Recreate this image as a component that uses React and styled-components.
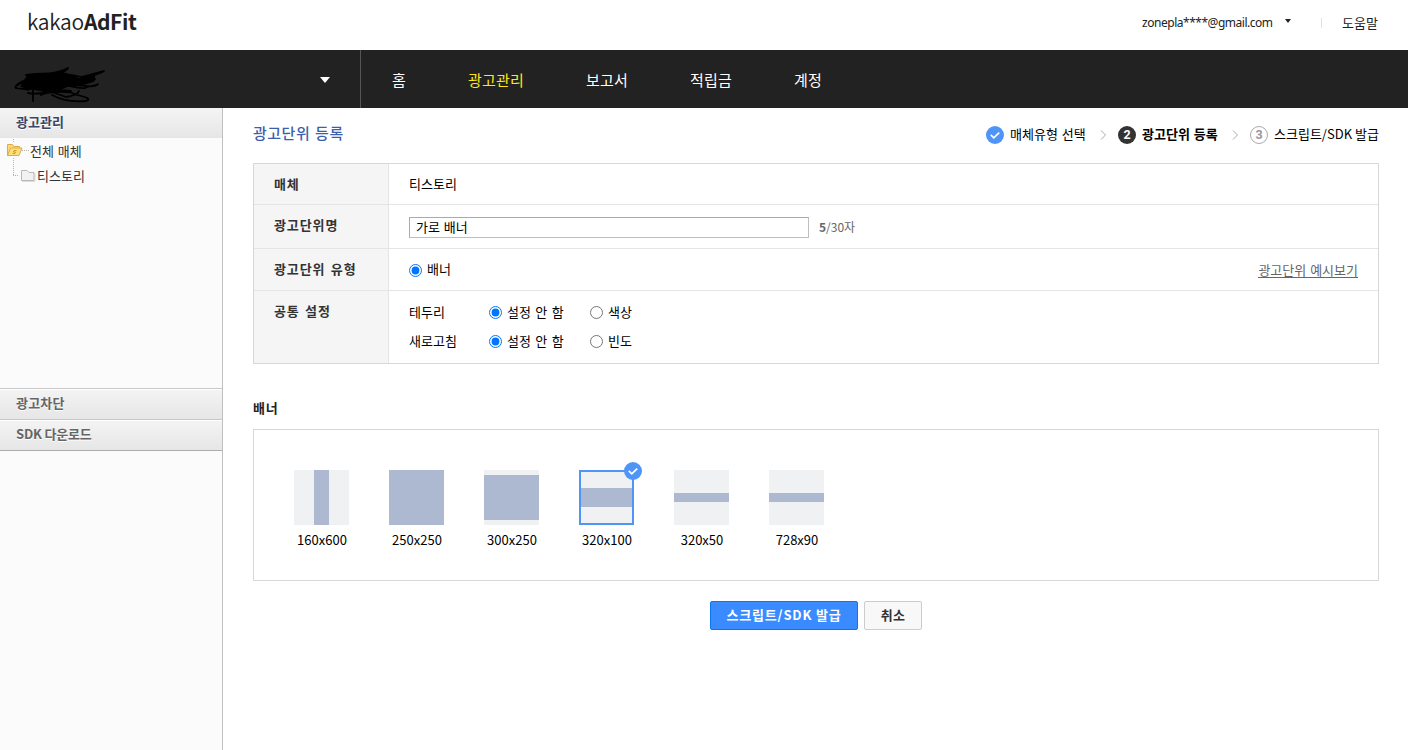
import { styled, createGlobalStyle } from "styled-components";

const GlobalStyle = createGlobalStyle`
  * {
    box-sizing: border-box;
  }
  body {
    margin: 0;
    background: #fff;
    color: #000;
    font-family: "Noto Sans CJK KR", "Noto Sans", sans-serif;
    font-size: 13px;
    line-height: 18px;
    word-spacing: 1px;
  }
`;

const Page = styled.div`
  height: 750px;
  display: flex;
  flex-direction: column;
  overflow: hidden;
`;

const Header = styled.header`
  height: 50px;
  padding: 0 30px 0 27px;
  display: flex;
  justify-content: space-between;
`;

const Logo = styled.h1`
  margin: 0;
  padding-top: 7px;
  color: #222;
  font-size: 21px;
  font-weight: 350;
  line-height: 28px;
  letter-spacing: -0.3px;
`;

const LogoBold = styled.b`
  font-weight: 700;
  letter-spacing: -0.4px;
`;

const UserMenu = styled.div`
  display: flex;
  align-items: center;
  height: 45px;
  color: #222;
`;

const Email = styled.span`
  width: 131px;
  font-family: "Noto Sans", sans-serif;
  font-size: 12px;
  letter-spacing: -0.48px;
  white-space: nowrap;
`;

const Caret = styled.i`
  width: 0;
  height: 0;
  border: solid transparent;
  border-width: ${(props) => props.$size}px ${(props) => props.$half}px 0;
  border-top-color: ${(props) => props.color};
`;

const UserCaret = styled(Caret)`
  margin: 0 30px 4px 12px;
`;

const Divider = styled.span`
  width: 1px;
  height: 10px;
  margin-right: 20px;
  background: #e1e1e1;
`;

const Bar = styled.nav`
  height: 58px;
  display: flex;
  background: #222;
`;

const Account = styled.div`
  width: 361px;
  padding: 2px 30px 0 14px;
  border-right: 1px solid #555;
  display: flex;
  align-items: center;
  justify-content: space-between;
`;

const Menu = styled.div`
  padding-left: 31px;
  display: flex;
  align-items: center;
  gap: 62px;
`;

const MenuItem = styled.span`
  color: ${(props) => (props.$active ? "#ffe616" : "#fff")};
  font-size: 15px;
  letter-spacing: 0.2px;
  padding-top: 1px;
`;

const Body = styled.div`
  flex: 1;
  display: flex;
`;

const Sidebar = styled.aside`
  width: 223px;
  border-right: 1px solid #bfbfbf;
  background: #fbfbfb;
`;

const SideTitle = styled.div`
  height: 30px;
  padding: 5px 16px 0;
  background: linear-gradient(#f4f4f4, #e6e6e6);
  color: #3a4668;
  font-weight: 700;
  word-spacing: 0;
  text-shadow: 0 1px 0 #fff;
`;

const SideLink = styled(SideTitle)`
  height: 31px;
  border-top: 1px solid #c8c8c8;
  box-shadow: inset 0 1px 0 #fff;
  color: #666;
  letter-spacing: ${(props) => props.$spacing || "0"};
`;

const SideEnd = styled.div`
  height: 1px;
  background: #adadad;
`;

const Tree = styled.div`
  height: 250px;
  display: flex;
  align-items: flex-start;
`;

const TreeLabels = styled.div`
  margin-left: -6px;
  padding-top: 4px;
  color: #333;
`;

const TreeLabel = styled.div`
  height: 25px;
  padding-left: ${(props) => props.$indent}px;
`;

const Main = styled.main`
  flex: 1;
  padding: 0 29px 0 30px;
`;

const TitleRow = styled.div`
  height: 55px;
  padding-top: 16px;
  display: flex;
  justify-content: space-between;
  align-items: flex-start;
`;

const Title = styled.h2`
  margin: 0;
  color: #3b5fad;
  font-size: 15px;
  font-weight: 500;
  letter-spacing: 0.5px;
`;

const Steps = styled.div`
  display: flex;
  align-items: center;
  padding-top: 1px;
  svg {
    flex: none;
  }
`;

const StepText = styled.span`
  margin-left: 6px;
  width: ${(props) => props.$width}px;
  padding-bottom: 1px;
  font-weight: ${(props) => (props.$active ? 700 : 400)};
  white-space: nowrap;
`;

const LastStepText = styled(StepText)`
  word-spacing: 0;
`;

const Chevron = styled.svg`
  margin: 0 11px 0 15px;
`;

const Form = styled.div`
  border: 1px solid #d7d7d7;
`;

const Row = styled.div`
  height: ${(props) => props.$height}px;
  display: flex;
  border-bottom: 1px solid #e5e5e5;
  &:last-child {
    border-bottom: 0;
  }
`;

const Label = styled.div`
  width: 135px;
  padding: 11px 0 0 20px;
  border-right: 1px solid #e5e5e5;
  background: #f5f5f5;
  color: #333;
  font-weight: 700;
  letter-spacing: 0.9px;
  word-spacing: 1.5px;
`;

const Field = styled.div`
  flex: 1;
  padding: 0 20px;
  display: flex;
  align-items: center;
`;

const Options = styled(Field)`
  flex-direction: column;
  align-items: flex-start;
  justify-content: center;
  gap: 11px;
`;

const OptionRow = styled.div`
  display: grid;
  grid-template-columns: 80px 101px auto;
`;

const OptionName = styled.span`
  margin-top: -1px;
`;

const TextInput = styled.input`
  width: 400px;
  height: 21px;
  margin-top: 1px;
  padding: 0 6px 1px;
  border: 1px solid #bfbfbf;
  border-top-color: #aaa;
  border-left-color: #aaa;
  font: inherit;
  word-spacing: 1px;
  color: #000;
  outline: 0;
`;

const Count = styled.span`
  margin-left: 10px;
  color: #666;
  font-size: 12px;
`;

const RadioLabel = styled.label`
  display: flex;
  align-items: center;
  gap: 5px;
`;

const TypeField = styled(Field)`
  padding-top: 1px;
`;

const RadioText = styled.span`
  margin-top: -1px;
  padding-bottom: 1px;
  word-spacing: 1.5px;
`;

const Radio = styled.input`
  width: 13px;
  height: 13px;
  margin: 0;
`;

const Example = styled.a`
  margin-left: auto;
  color: #666;
  border-bottom: 1px solid #666;
  line-height: 14px;
`;

const SubTitle = styled.h3`
  height: 65px;
  margin: 0;
  padding-top: 35px;
  color: #222;
  font-size: 13px;
  font-weight: 700;
  letter-spacing: 0.8px;
`;

const Sizes = styled.div`
  height: 152px;
  padding: 40px;
  border: 1px solid #d7d7d7;
  display: flex;
  gap: 40px;
`;

const Size = styled.div`
  position: relative;
  width: 55px;
  display: flex;
  flex-direction: column;
  align-items: center;
  gap: 6px;
`;

const SizeName = styled.span`
  padding-left: 1px;
`;

const Thumb = styled.div`
  width: 55px;
  height: 55px;
  flex: none;
  display: flex;
  align-items: center;
  justify-content: center;
  background: #f0f1f3;
  border: ${(props) => (props.$selected ? "2px solid #4f95f8" : "0")};
`;

const Shape = styled.div`
  width: ${(props) => props.$w};
  height: ${(props) => props.$h};
  background: #acb9d0;
`;

const Badge = styled.div`
  position: absolute;
  top: -8px;
  right: -8px;
  height: 18px;
  svg {
    display: block;
  }
`;

const Buttons = styled.div`
  margin-top: 20px;
  display: flex;
  justify-content: center;
  gap: 6px;
`;

const Button = styled.button`
  width: ${(props) => (props.$primary ? 148 : 58)}px;
  height: 29px;
  padding: 0 0 1px;
  border: 1px solid ${(props) => (props.$primary ? "#0b75ec" : "#ccc")};
  border-radius: 2px;
  background: ${(props) => (props.$primary ? "#398bff" : "#f8f8f8")};
  color: ${(props) => (props.$primary ? "#fff" : "#333")};
  font: inherit;
  font-weight: 700;
  letter-spacing: ${(props) => (props.$primary ? "0.8px" : "0.3px")};
`;

const sizes = [
  { name: "160x600", w: "15px", h: "55px" },
  { name: "250x250", w: "55px", h: "55px" },
  { name: "300x250", w: "55px", h: "45px" },
  { name: "320x100", w: "100%", h: "19px", selected: true },
  { name: "320x50", w: "55px", h: "9px" },
  { name: "728x90", w: "55px", h: "9px" },
];

const CheckIcon = () => (
  <svg width="18" height="18" viewBox="0 0 18 18">
    <circle cx="9" cy="9" r="9" fill="#4f95f8" />
    <path d="M4.8 8.8l3 3 5.4-5.2" fill="none" stroke="#fff" strokeWidth="1.7" />
  </svg>
);

const NumberIcon = ({ value, active }) => (
  <svg width="18" height="18" viewBox="0 0 18 18">
    <circle
      cx="9"
      cy="9"
      r={active ? 9 : 8.5}
      fill={active ? "#333" : "#fff"}
      stroke={active ? "none" : "#aaa"}
    />
    <text
      x="9"
      y="13.4"
      textAnchor="middle"
      fontFamily="Roboto, sans-serif"
      fontSize="12.5"
      fontWeight="700"
      fill={active ? "#fff" : "#999"}
    >
      {value}
    </text>
  </svg>
);

const Arrow = () => (
  <Chevron width="7" height="10" viewBox="0 0 7 10">
    <path d="M1 0.5l4.5 4.5L1 9.5" fill="none" stroke="#aaa" />
  </Chevron>
);

const Scribble = () => (
  <svg width="92" height="46" viewBox="14 57 92 46">
    <path
      d="M27 75l12-1 12 0 12-2 8 3 8 3 8-3 8 0 0 4-6 4-8 3-14 1-8 4-15 1-14-3-10-2 4-6z"
      fill="#000"
    />
    <g fill="none" stroke="#000" strokeWidth="1.8" strokeLinecap="round" strokeLinejoin="round">
      <path d="M16 88c-3-2 9-9 19-12 14-2 27-4 33-8-3 8-43 11-50 17M26 75c20-3 44-1 55 2 8-2 15-4 23-6-8 5-22 7-31 10 8 1 15-2 22-2-2 4-9 4-14 4" />
      <path d="M16 88c7 2 15 1 23 0M33 87v14M27 90c8-3 24-6 34-5 10 0 17 4 24 3 2-2 9-1 13-4-4 5-16 1-20 1" />
      <path d="M28 93c13 3 30-5 43-2M41 95c8-4 31-4 33-1 12 3 18 5 12 7-11 1-23 0-34-6M52 92l14 5c7-1 12-3 13-6" />
    </g>
  </svg>
);

const TreeIcons = () => (
  <svg width="36" height="50" viewBox="0 138 36 50">
    <path
      d="M13.5 139v4M13.5 158v18M13 175.500h6M22 150.500h8"
      fill="none"
      stroke="#b5b5b5"
      strokeDasharray="1 1"
    />
    <path d="M7.500 155.500v-11h5l1.500 2h5.500v3" fill="#fbd978" stroke="#e0aa48" />
    <path d="M7.500 155.500l3-7.500h11.500l-3 7.500z" fill="#ffe07c" stroke="#e0aa48" />
    <path d="M16.500 150.500h-2.500l-.5 1.500h2l-.5 1.500h-2.500" fill="none" stroke="#d09a38" />
    <path d="M22 181.500h13v-8" fill="none" stroke="#ddd" />
    <path d="M21.500 180.500v-10h5.500l2 2h5v8z" fill="#f2f2f4" stroke="#b8b8b8" />
  </svg>
);

const Option = ({ name, text, checked }) => (
  <RadioLabel>
    <Radio type="radio" name={name} defaultChecked={checked} />
    <RadioText>{text}</RadioText>
  </RadioLabel>
);

const App = () => {
  return (
    <Page>
      <GlobalStyle />
      <Header>
        <Logo>
          kakao<LogoBold>AdFit</LogoBold>
        </Logo>
        <UserMenu>
          <Email>zonepla****@gmail.com</Email>
          <UserCaret $size={4} $half={3.5} color="#222" />
          <Divider />
          <span>도움말</span>
        </UserMenu>
      </Header>
      <Bar>
        <Account>
          <Scribble />
          <Caret $size={6} $half={5} color="#fff" />
        </Account>
        <Menu>
          <MenuItem>홈</MenuItem>
          <MenuItem $active>광고관리</MenuItem>
          <MenuItem>보고서</MenuItem>
          <MenuItem>적립금</MenuItem>
          <MenuItem>계정</MenuItem>
        </Menu>
      </Bar>
      <Body>
        <Sidebar>
          <SideTitle>광고관리</SideTitle>
          <Tree>
            <TreeIcons />
            <TreeLabels>
              <TreeLabel $indent={0}>전체 매체</TreeLabel>
              <TreeLabel $indent={7}>티스토리</TreeLabel>
            </TreeLabels>
          </Tree>
          <SideLink $spacing="0.2px">광고차단</SideLink>
          <SideLink $spacing="-0.2px">SDK 다운로드</SideLink>
          <SideEnd />
        </Sidebar>
        <Main>
          <TitleRow>
            <Title>광고단위 등록</Title>
            <Steps>
              <CheckIcon />
              <StepText $width={75}>매체유형 선택</StepText>
              <Arrow />
              <NumberIcon value="2" active />
              <StepText $width={75} $active>
                광고단위 등록
              </StepText>
              <Arrow />
              <NumberIcon value="3" />
              <LastStepText $width={105}>스크립트/SDK 발급</LastStepText>
            </Steps>
          </TitleRow>
          <Form>
            <Row $height={41}>
              <Label>매체</Label>
              <Field>티스토리</Field>
            </Row>
            <Row $height={44}>
              <Label>광고단위명</Label>
              <Field>
                <TextInput defaultValue="가로 배너" />
                <Count>
                  <b>5</b>/30자
                </Count>
              </Field>
            </Row>
            <Row $height={42}>
              <Label>광고단위 유형</Label>
              <TypeField>
                <Option name="type" text="배너" checked />
                <Example>광고단위 예시보기</Example>
              </TypeField>
            </Row>
            <Row $height={72}>
              <Label>공통 설정</Label>
              <Options>
                <OptionRow>
                  <OptionName>테두리</OptionName>
                  <Option name="border" text="설정 안 함" checked />
                  <Option name="border" text="색상" />
                </OptionRow>
                <OptionRow>
                  <OptionName>새로고침</OptionName>
                  <Option name="refresh" text="설정 안 함" checked />
                  <Option name="refresh" text="빈도" />
                </OptionRow>
              </Options>
            </Row>
          </Form>
          <SubTitle>배너</SubTitle>
          <Sizes>
            {sizes.map((size) => (
              <Size key={size.name}>
                <Thumb $selected={size.selected}>
                  <Shape $w={size.w} $h={size.h} />
                </Thumb>
                {size.selected && (
                  <Badge>
                    <CheckIcon />
                  </Badge>
                )}
                <SizeName>{size.name}</SizeName>
              </Size>
            ))}
          </Sizes>
          <Buttons>
            <Button $primary>스크립트/SDK 발급</Button>
            <Button>취소</Button>
          </Buttons>
        </Main>
      </Body>
    </Page>
  );
};

export default App;
